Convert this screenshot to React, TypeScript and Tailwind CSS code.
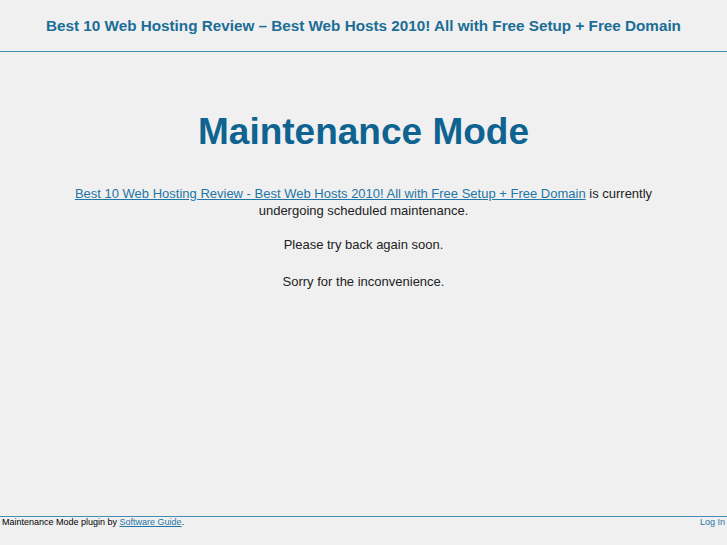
import React from 'react';

const siteName = 'Best 10 Web Hosting Review - Best Web Hosts 2010! All with Free Setup + Free Domain';

export default function App() {
    return (
        <div className="min-h-[545px] bg-[#f0f0f0] flex flex-col text-[#222]" style={{ fontFamily: '"Liberation Sans", Arial, sans-serif' }}>
            <header className="h-[52px] border-b border-[#4a8bb3] flex items-center justify-center">
                <h1 className="text-[15.25px] font-bold text-[#1b6d96] pt-[1px]">Best 10 Web Hosting Review – Best Web Hosts 2010! All with Free Setup + Free Domain</h1>
            </header>
            <main className="flex-grow text-center">
                <h2 className="text-[37px] font-bold text-[#0f6391] mt-[61px] mb-[35px] leading-none">Maintenance Mode</h2>
                <p className="text-[13px] leading-[17px] px-[60px]">
                    <a href="#" className="text-[#1f75a6] underline">{siteName}</a> is currently undergoing scheduled maintenance.
                </p>
                <p className="text-[13px] leading-[17px] mt-[17px]">Please try back again soon.</p>
                <p className="text-[13px] leading-[17px] mt-[20px]">Sorry for the inconvenience.</p>
            </main>
            <footer className="border-t border-[#4a8bb3] h-[29px] flex justify-between px-[2px] text-[9px] leading-[11px] text-black">
                <span>Maintenance Mode plugin by <a href="#" className="text-[#1f75a6] underline">Software Guide</a>.</span>
                <a href="#" className="text-[#1f75a6]">Log In</a>
            </footer>
        </div>
    );
}
